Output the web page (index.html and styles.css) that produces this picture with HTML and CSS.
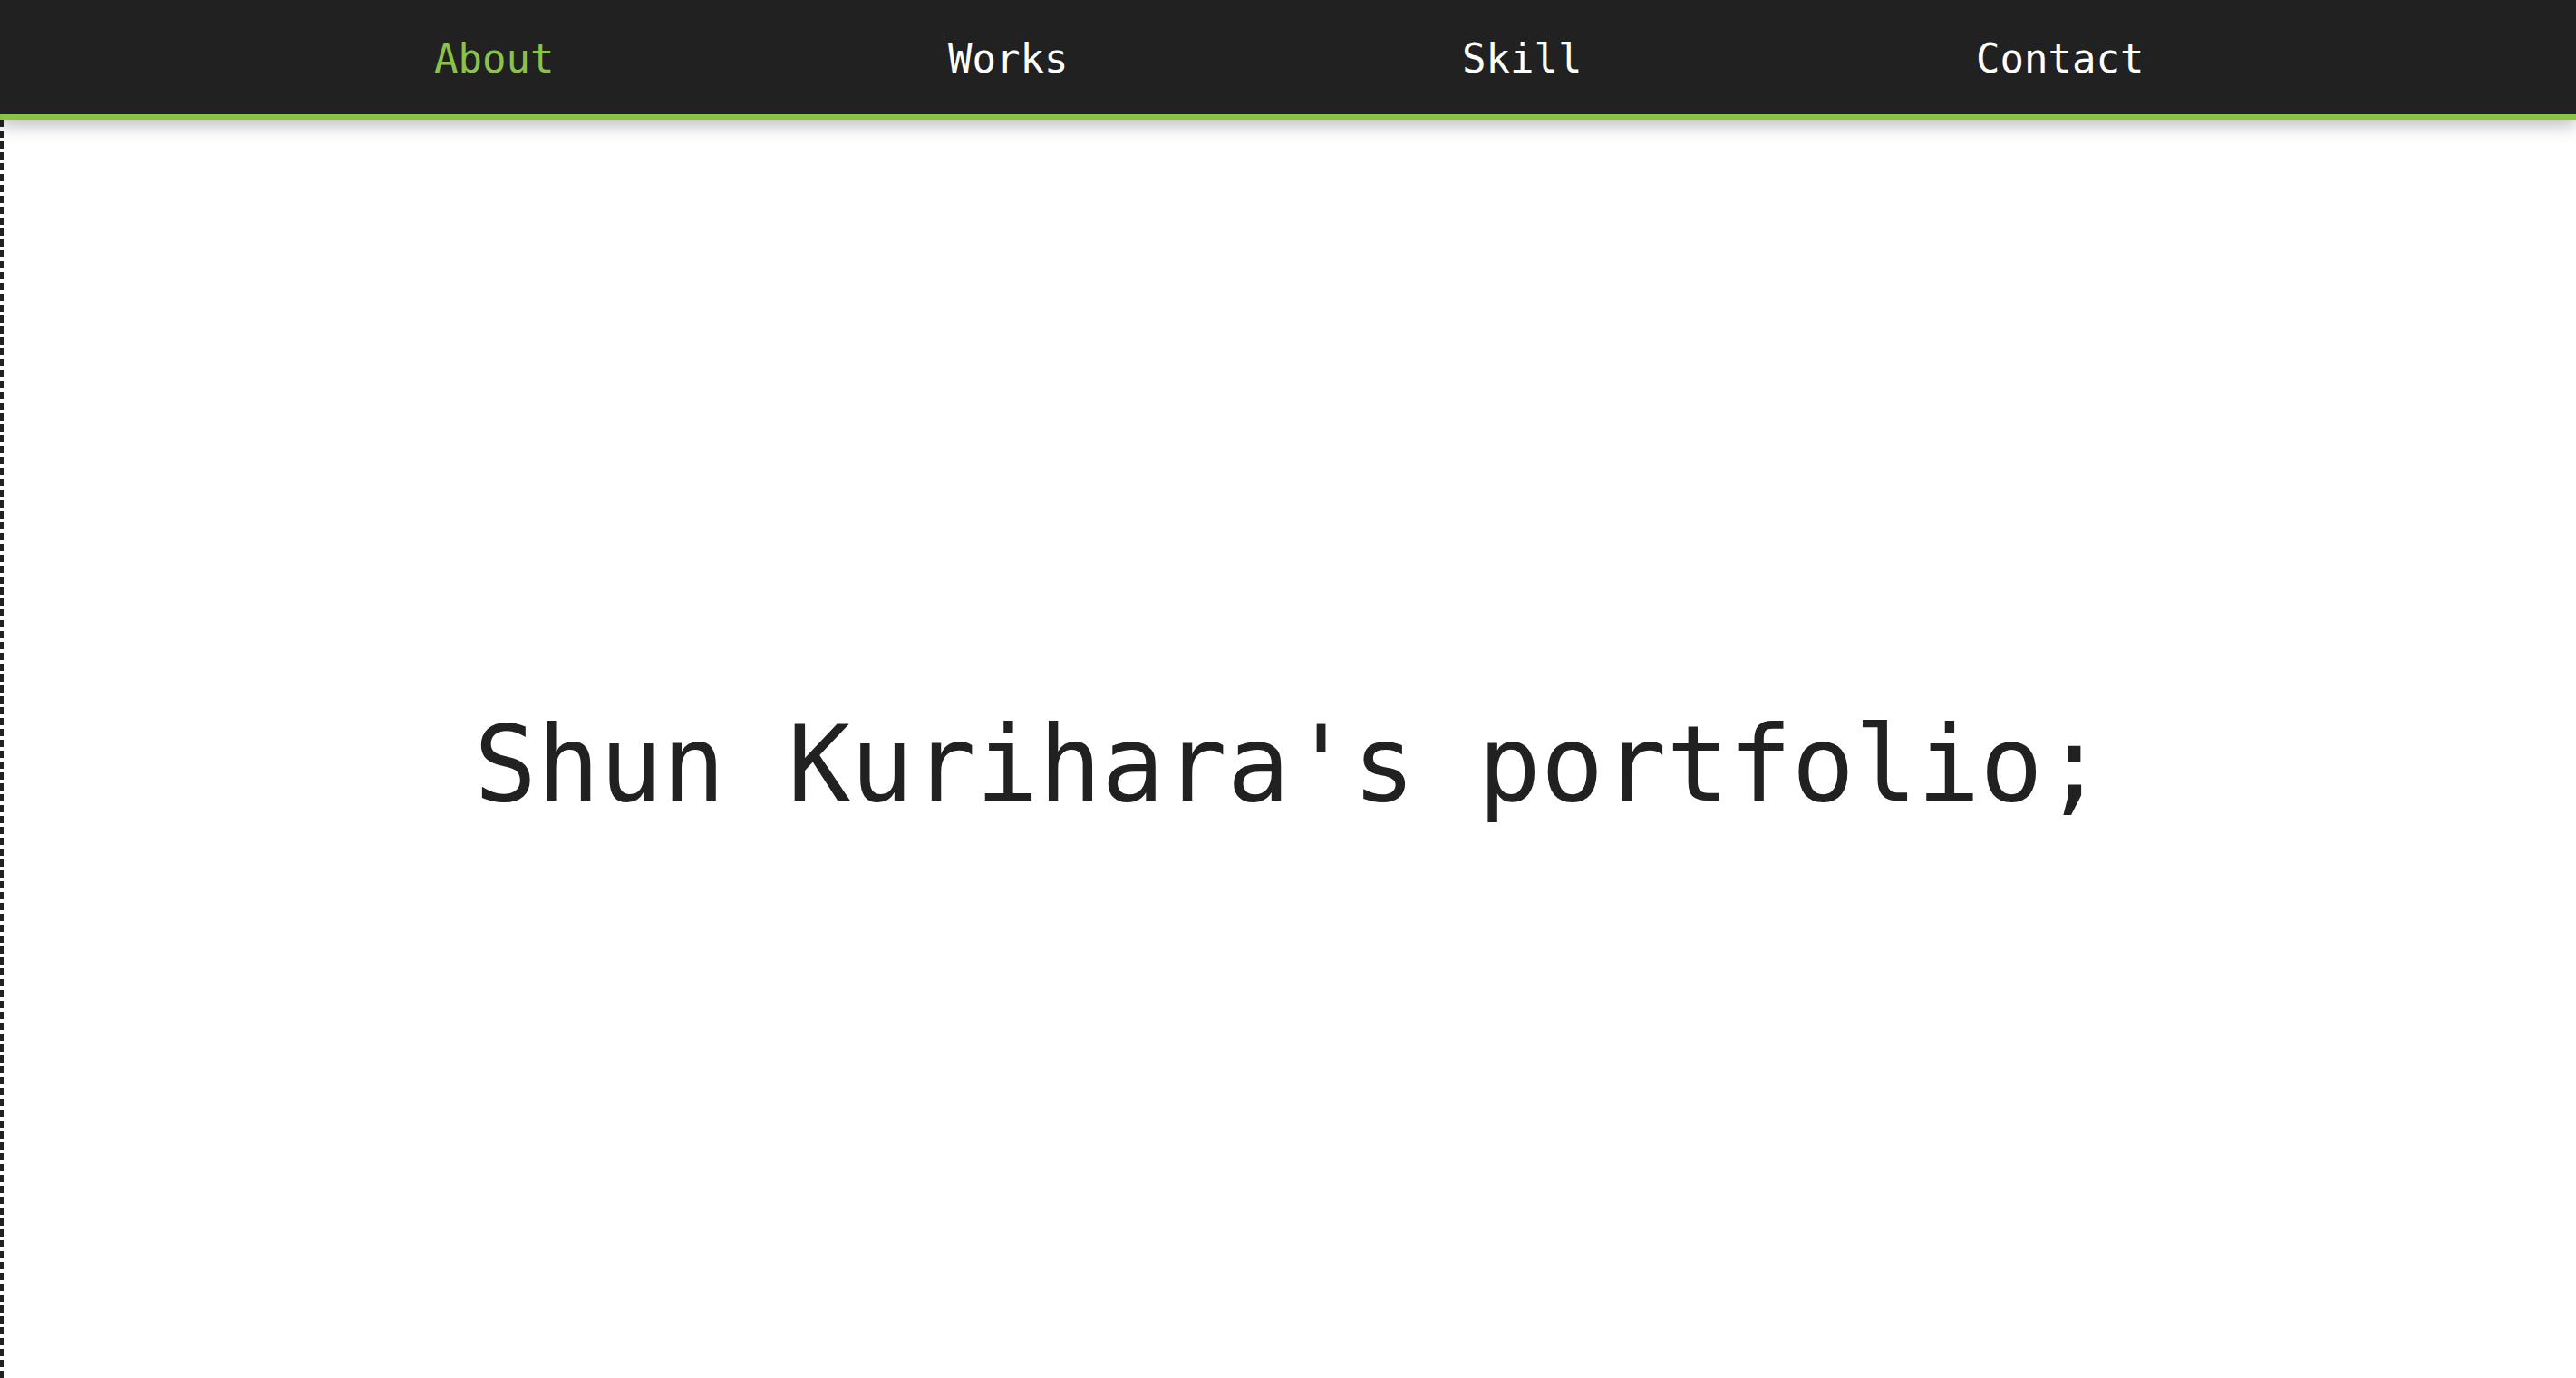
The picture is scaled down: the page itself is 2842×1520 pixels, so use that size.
FILE: index.html
```html
<!DOCTYPE html>
<html lang="en">
<head>
<meta charset="utf-8">
<title>Shun Kurihara's portfolio</title>
<link rel="stylesheet" href="styles.css">
</head>
<body>
<header class="site-header">
  <nav class="nav">
    <ul class="nav-list">
      <li class="nav-item"><a class="nav-link is-active" href="#about">About</a></li>
      <li class="nav-item"><a class="nav-link" href="#works">Works</a></li>
      <li class="nav-item"><a class="nav-link" href="#skill">Skill</a></li>
      <li class="nav-item"><a class="nav-link" href="#contact">Contact</a></li>
    </ul>
  </nav>
</header>
<main class="hero">
  <h1 class="hero-title">Shun Kurihara's portfolio;</h1>
</main>
</body>
</html>
```

FILE: styles.css
```css
* {
  box-sizing: border-box;
}

html, body {
  margin: 0;
  padding: 0;
  background: #ffffff;
}

body {
  font-family: "DejaVu Sans Mono", "Liberation Mono", monospace;
  color: #212121;
  height: 100vh;
  display: flex;
  flex-direction: column;
  overflow: hidden;
}

.site-header {
  position: relative;
  z-index: 2;
  background: #212121;
  border-bottom: 6px solid #8bc34a;
  box-shadow: 0 6px 18px rgba(0, 0, 0, 0.28);
  flex: 0 0 auto;
}

.nav-list {
  list-style: none;
  margin: 0;
  padding: 4px 0 0 479px;
  height: 126px;
  display: grid;
  grid-template-columns: repeat(4, 567px);
  align-items: center;
}

.nav-link {
  font-size: 44px;
  color: #ffffff;
  text-decoration: none;
  line-height: 1;
}

.nav-link.is-active {
  color: #8bc34a;
}

.hero {
  flex: 1 1 auto;
  border-left: 4px dashed #212121;
  display: flex;
  align-items: center;
  justify-content: center;
  padding-top: 34px;
}

.hero-title {
  margin: 0;
  font-size: 115px;
  font-weight: 400;
  line-height: normal;
  color: #212121;
  white-space: nowrap;
}
```
